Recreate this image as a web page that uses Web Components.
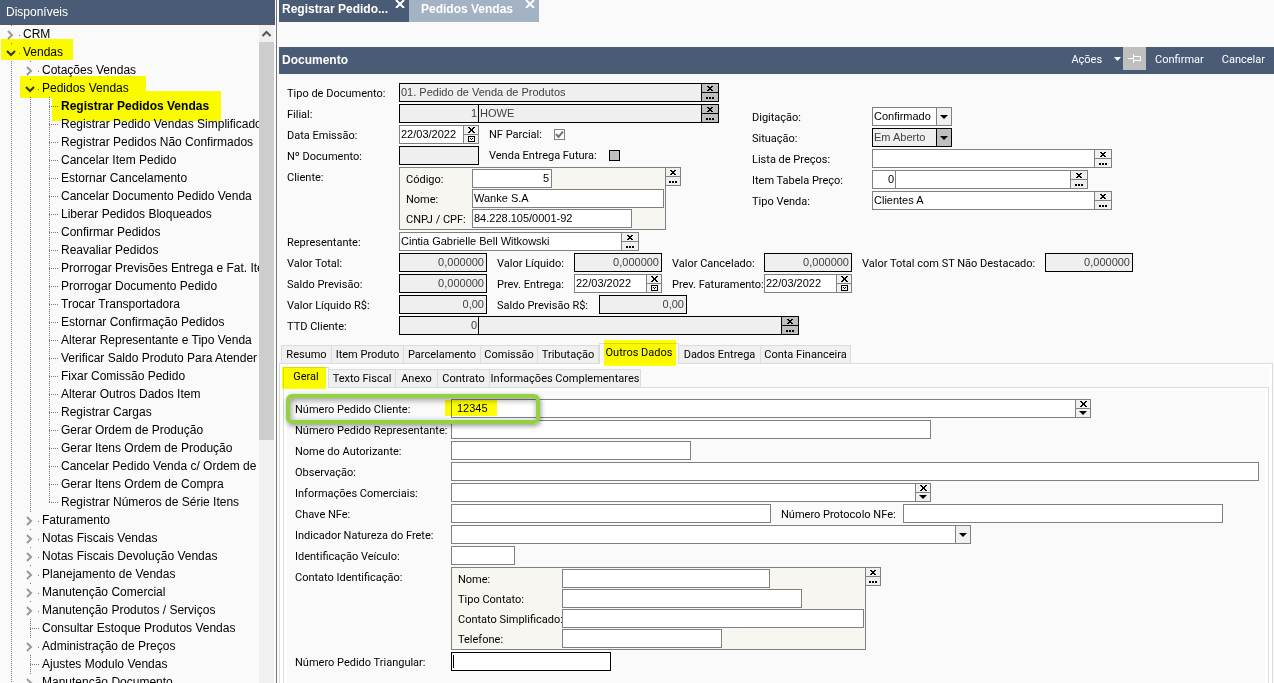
<!DOCTYPE html>
<html lang="pt-BR">
<head>
<meta charset="utf-8">
<title>Registrar Pedidos Vendas</title>
<style>
  :root {
    --navy: #4a5b75;
    --page: #fafafa;
    --line: #808080;
    --tab-line: #dcdcdc;
    --label-font: 11px "Roboto", sans-serif;
    --field-font: 11px "Liberation Sans", Arial, sans-serif;
    --tree-font: 12px "Liberation Sans", Arial, sans-serif;
  }
  body { margin: 0; background: var(--page); color: #000; font: var(--label-font); }
</style>
</head>
<body>
<erp-app></erp-app>

<script>
/* Base class: renders markup once into an open shadow root. */
class ErpElement extends HTMLElement {
  connectedCallback() {
    if (this.shadowRoot) return;
    const root = this.attachShadow({ mode: 'open' });
    root.innerHTML = '<style>*{box-sizing:border-box}' + this.styles() + '</style>' + this.markup();
  }
  attr(name, fallback = '') { return this.getAttribute(name) ?? fallback; }
  styles() { return ''; }
  markup() { return '<slot></slot>'; }
}

/* Yellow marker drawn over its host's content. mark="left top width height" */
const marker = (spec) => {
  if (!spec) return '';
  const [l, t, w, h] = spec.split(' ');
  return `<i class="mark" style="left:${l}px;top:${t}px;width:${w}px;height:${h}px"></i>`;
};
const MARK_CSS = '.mark{position:absolute;z-index:2;background:#ff0;mix-blend-mode:multiply;pointer-events:none}';

/* ---------- navigation tree ---------- */
class ErpTreeItem extends ErpElement {
  styles() {
    return `:host{display:block;position:relative;height:18px}
      a{display:flex;height:18px;line-height:18px;color:#000;text-decoration:none;white-space:nowrap;font:var(--tree-font);align-items:center}
      :host([current]) a{font-weight:bold}
      svg{flex:none;display:block}
      .g{stroke:#777;stroke-dasharray:1 1;fill:none;shape-rendering:crispEdges}
      .c{fill:none;stroke:#999;stroke-width:2}
      .o{stroke:#333}` + MARK_CSS;
  }
  markup() {
    const depth = +this.attr('depth', 0), kind = this.attr('kind', 'leaf');
    let g = '';
    for (let k = 0; k < depth; k++) g += `<path class="g" d="M${11.5 + 19 * k} 0V18"/>`;
    const x = 11 + 19 * depth;
    if (kind === 'leaf') {
      g += `<path class="g" d="M${x + .5} 0V${this.hasAttribute('last') ? 10 : 18}M${x} 9.5H${x + 9}"/>`;
    } else {
      g += `<path class="g" d="M${x + .5} 0v1M${x + 8} 10.5h1"/>`;
      g += kind === 'open'
        ? `<path class="c o" d="M${x - 4} 8l4 4 4-4"/>`
        : `<path class="c" d="M${x - 3} 6l4 4-4 4"/>`;
    }
    const w = 23 + 19 * depth;
    return `<a href="#"><svg width="${w}" height="18" aria-hidden="true">${g}</svg><slot></slot></a>` + marker(this.attr('mark'));
  }
}

class ErpSidebar extends ErpElement {
  styles() {
    return `:host{display:flex;flex-direction:column;width:277px;flex:none;border-right:1px solid #777;background:var(--page);overflow:hidden}
      header{height:25px;flex:none;background:var(--navy);border-bottom:1px solid #5c5552;margin-right:1px;color:#fff;font:var(--tree-font);line-height:25px;padding-left:6px}
      .body{display:flex;flex:1;min-height:0}
      nav{flex:1;min-width:0;overflow:hidden}
      .bar{width:15px;margin-right:2px;background:#f0f0f0;display:flex;flex-direction:column}
      .bar svg{display:block;flex:none}
      .thumb{height:398px;background:#cdcdcd}`;
  }
  markup() {
    return `<header>Disponíveis</header>
      <div class="body"><nav aria-label="Disponíveis"><slot></slot></nav>
      <div class="bar"><svg width="15" height="17"><path d="M3.500 11l4-4 4 4" fill="none" stroke="#555" stroke-width="2"/></svg><div class="thumb"></div></div></div>`;
  }
}

/* ---------- window tabs ---------- */
class ErpDocTab extends ErpElement {
  styles() {
    return `:host{display:flex;position:relative;width:130px;height:22px;background:#a3b3c4;color:#fff}
      :host([active]){background:var(--navy)}
      button{border:0;background:none;color:inherit;padding:0 0 4px;margin:0;font:bold 12px "Liberation Sans",Arial,sans-serif}
      .t{flex:1;text-align:left;padding-left:12px}
      :host([active]) .t{padding-left:3px}
      .x{width:18px;height:8px;padding:0;display:flex;justify-content:center}
      svg{display:block}`;
  }
  markup() {
    return `<button class="t"><slot></slot></button>
      <button class="x" aria-label="Fechar"><svg width="10" height="8"><path d="M1 0l8 8M9 0l-8 8" stroke="#fff" stroke-width="2"/></svg></button>`;
  }
}

/* ---------- document toolbar ---------- */
class ErpToolbar extends ErpElement {
  styles() {
    return `:host{display:flex;align-items:flex-start;height:27px;background:var(--navy);color:#fff}
      h1{flex:1;margin:0;padding-left:3px;font:bold 12px/27px "Liberation Sans",Arial,sans-serif}
      button{border:0;background:none;color:#fff;font:var(--label-font);height:24px;padding:0 9px;margin:0}
      .menu{display:flex;align-items:center;gap:12px;padding:0 2px 0 0}
      .pin{width:23px;height:23px;padding:0;background:#bfbfbf;display:flex;align-items:center;justify-content:center}
      .menu,.pin,.cmd{flex:none}`;
  }
  markup() {
    return `<h1>Documento</h1>
      <button class="menu">Ações<svg width="7" height="4"><path d="M0 0h7L3.500 4z" fill="#fff"/></svg></button>
      <button class="pin" aria-label="Fixar"><svg width="13" height="9" shape-rendering="crispEdges"><path d="M0 4.500h5M5.500 0v9M5 2.500h7.500v4H5" fill="none" stroke="#fff"/></svg></button>
      <button class="cmd">Confirmar</button><button class="cmd">Cancelar</button>`;
  }
}

/* ---------- small stacked buttons beside a field ---------- */
const GLYPHS = {
  clear: '<svg width="6" height="5" shape-rendering="crispEdges"><path d="M0 0h2v1h2V0h2v1H5v1H4v1h1v1h1v1H4V4H2v1H0V4h1V3h1V2H1V1H0z"/></svg>',
  cross: '<svg width="7" height="6" shape-rendering="crispEdges"><path d="M0 0h2v1H0zM5 0h2v1H5zM1 1h2v1H1zM4 1h2v1H4zM2 2h3v2H2zM1 4h2v1H1zM4 4h2v1H4zM0 5h2v1H0zM5 5h2v1H5z"/></svg>',
  more: '<svg width="8" height="4" shape-rendering="crispEdges"><path d="M0 2h2v2H0zM3 2h2v2H3zM6 2h2v2H6z"/></svg>',
  down: '<svg width="8" height="4"><path d="M0 0h8L4 4z"/></svg>',
  calendar: '<svg width="7" height="6" shape-rendering="crispEdges"><path d="M.5 .5h6v5h-6z" fill="none" stroke="#000"/><path d="M2 2h1v1H2zM4 2h1v1H4zM3 3h1v1H3z"/></svg>'
};
class ErpStack extends ErpElement {
  styles() {
    return `:host{display:grid;grid-template-rows:8px 8px;gap:1px;height:17px;background:var(--edge,var(--line))}
      button{display:flex;align-items:center;justify-content:center;border:0;margin:0;padding:0;background:var(--face,#f0f0f0);min-width:0}
      svg{display:block}`;
  }
  markup() {
    const [a, b] = this.attr('icons', 'clear more').split(' ');
    const names = { clear: 'Limpar', cross: 'Limpar', more: 'Pesquisar', down: 'Expandir', calendar: 'Calendário' };
    return `<button aria-label="${names[a]}">${GLYPHS[a]}</button><button aria-label="${names[b]}">${GLYPHS[b]}</button>`;
  }
}

/* ---------- labelled field ----------
   kind: plain | lookup | date | memo | select; lw: label width; w: box width */
class ErpField extends ErpElement {
  styles() {
    return `:host{display:flex;position:relative;height:19px;--edge:var(--line)}
      :host([locked]){--edge:#000;--face:#bfbfbf}
      :host([focused]){--edge:#000}
      label{flex:none;line-height:21px;white-space:nowrap}
      .box{display:flex;flex:0 1 auto;min-width:0;border:1px solid var(--edge);background:#fff}
      :host([locked]) .box{background:#efefef}
      input,select{border:0;outline:0;margin:0;padding:0 1px 2px;background:none;font:var(--field-font);color:#000;min-width:0;flex:1;height:17px;border-radius:0;appearance:none;opacity:1}
      :host([locked]) input,:host([locked]) select{color:#404048}
      :host([num]) input{text-align:right;padding-right:2px}
      .code{flex:none;text-align:right;border-right:1px solid var(--edge)}
      :host([focused]) input{background:linear-gradient(#000,#000) 1px 2px/1px 13px no-repeat}
      :host([inset]) input{padding-left:5px}
      .side{flex:none;border-left:1px solid var(--edge)}
      .arrow{width:15px;flex:none;display:flex;align-items:center;justify-content:center;border-left:1px solid var(--edge);background:var(--face,#f0f0f0);pointer-events:none}
      .callout{position:absolute;left:-9px;top:-5px;width:254px;height:30px;z-index:3;border:4px solid #92d13f;border-radius:6px;box-shadow:1px 2px 5px rgba(0,0,0,.4),inset 1px 2px 6px rgba(0,0,0,.4);pointer-events:none}` + MARK_CSS;
  }
  markup() {
    const kind = this.attr('kind', 'plain'), locked = this.hasAttribute('locked');
    const value = this.attr('value'), text = this.attr('label');
    const icons = { lookup: 'clear more', date: 'cross calendar', memo: 'cross down' }[kind];
    const width = kind === 'lookup' ? 17 : 15;
    let inner = '';
    if (this.hasAttribute('code'))
      inner += `<input class="code" aria-label="${text} código" value="${this.attr('code')}" style="width:${this.attr('cw')}px" ${locked ? 'readonly' : ''}>`;
    inner += kind === 'select'
      ? `<select id="f" ${locked ? 'disabled' : ''}><option>${value}</option></select><span class="arrow">${GLYPHS.down}</span>`
      : `<input id="f" value="${value}" ${locked ? 'readonly' : ''}>`;
    if (icons) inner += `<erp-stack class="side" icons="${icons}" style="width:${width}px"></erp-stack>`;
    return `<label for="f" style="width:${this.attr('lw')}px">${text}</label><div class="box" style="width:${this.attr('w')}px">${inner}</div>`
      + marker(this.attr('mark')) + (this.hasAttribute('callout') ? '<i class="callout"></i>' : '');
  }
}

class ErpCheck extends ErpElement {
  styles() {
    return `:host{display:flex;align-items:center;height:19px}
      label{line-height:21px;white-space:nowrap}
      input{appearance:none;width:11px;height:11px;margin:0;border:1px solid var(--line);background:#fff}
      input:checked{background:#fff url("data:image/svg+xml,%3Csvg xmlns='http://www.w3.org/2000/svg' width='9' height='9'%3E%3Cpath d='M1 4l2.500 3L8 1.500' fill='none' stroke='%23777' stroke-width='2'/%3E%3C/svg%3E")}
      input:disabled{border-color:#000;background:#bfbfbf}`;
  }
  markup() {
    return `<label for="c" style="width:${this.attr('lw')}px">${this.attr('label')}</label>
      <input id="c" type="checkbox" ${this.hasAttribute('checked') ? 'checked' : ''} ${this.hasAttribute('locked') ? 'disabled' : ''}>`;
  }
}

/* Framed group of fields with its own buttons at the right */
class ErpGroup extends ErpElement {
  styles() {
    return `:host{display:flex;align-items:flex-start}
      .name{flex:none;line-height:22px}
      .panel{display:flex;flex-direction:column;gap:1px;border:1px solid var(--line);background:#f7f6f1;padding:1px 1px 1px 6px}
      .btns{border:1px solid var(--line);border-left:0;width:15px}`;
  }
  markup() {
    return `<span class="name" style="width:${this.attr('lw')}px">${this.attr('label')}</span>
      <div class="panel" role="group" aria-label="${this.attr('label')}" style="width:${this.attr('w')}px"><slot></slot></div>
      <div class="btns"><erp-stack></erp-stack></div>`;
  }
}

/* Row and column helpers */
class ErpRow extends ErpElement {
  styles() { return ':host{display:flex;gap:10px}'; }
}
class ErpCol extends ErpElement {
  styles() { return ':host{display:flex;flex-direction:column;gap:2px}'; }
}

/* ---------- tab strip with a framed pane ---------- */
class ErpTab extends ErpElement {
  styles() {
    return `:host{display:block;position:relative;height:18px;flex:none}
      button{display:block;width:100%;height:100%;margin:0;padding:0;border:1px solid var(--tab-line);border-left-width:0;border-bottom:0;background:#f0f0f0;font:var(--label-font);color:#000;text-align:center;white-space:nowrap}
      :host([first]) button{border-left-width:1px}
      :host([active]){height:21px;margin-bottom:-1px;z-index:1}
      :host([active]) button{background:var(--page);border-left-width:1px;padding-bottom:3px}` + MARK_CSS;
  }
  markup() {
    this.style.width = this.attr('w') + 'px';
    return `<button role="tab" aria-selected="${this.hasAttribute('active')}"><slot></slot></button>` + marker(this.attr('mark'));
  }
}
class ErpTabs extends ErpElement {
  styles() {
    return `:host{display:flex;flex-direction:column;flex:1;min-height:0}
      .strip{display:flex;align-items:flex-end;height:20px;flex:none;padding-left:var(--strip-start,0)}
      .pane{flex:1;min-height:0;display:flex;flex-direction:column;border:1px solid var(--tab-line);border-bottom:0;box-shadow:inset 3px 0 #fff,inset -3px 0 #fff,inset 0 3px #fff;padding:var(--pane-pad,3px 3px 0)}`;
  }
  markup() {
    return '<div class="strip" role="tablist"><slot name="tab"></slot></div><div class="pane" role="tabpanel"><slot></slot></div>';
  }
}

/* ---------- order form ---------- */
class ErpOrderForm extends ErpElement {
  styles() {
    return `:host{display:flex;flex-direction:column;flex:1;min-height:0}
      .head{padding:9px 8px 8px;display:flex;flex-direction:column;gap:2px}
      .top{display:flex;gap:33px}
      .left{width:432px;flex:none}
      .right{padding-top:24px}
      .outer{--strip-start:2px;margin-right:1px}
      .inner{--strip-start:0px;--pane-pad:11px 8px 0 11px}`;
  }
  markup() {
    return `<div class="head">
      <div class="top">
        <erp-col class="left">
          <erp-field kind="lookup" label="Tipo de Documento:" lw="112" w="320" value="01. Pedido de Venda de Produtos" locked></erp-field>
          <erp-field kind="lookup" label="Filial:" lw="112" w="320" code="1" cw="79" value="HOWE" locked></erp-field>
          <erp-row><erp-field kind="date" label="Data Emissão:" lw="112" w="80" value="22/03/2022"></erp-field><erp-check label="NF Parcial:" lw="65" checked></erp-check></erp-row>
          <erp-row><erp-field label="Nº Documento:" lw="112" w="80" locked></erp-field><erp-check label="Venda Entrega Futura:" lw="120" locked></erp-check></erp-row>
          <erp-group label="Cliente:" lw="112" w="267">
            <erp-field label="Código:" lw="66" w="80" value="5" num></erp-field>
            <erp-field label="Nome:" lw="66" w="192" value="Wanke S.A"></erp-field>
            <erp-field label="CNPJ / CPF:" lw="66" w="160" value="84.228.105/0001-92"></erp-field>
          </erp-group>
        </erp-col>
        <erp-col class="right">
          <erp-field kind="select" label="Digitação:" lw="120" w="80" value="Confirmado"></erp-field>
          <erp-field kind="select" label="Situação:" lw="120" w="80" value="Em Aberto" locked></erp-field>
          <erp-field kind="lookup" label="Lista de Preços:" lw="120" w="240"></erp-field>
          <erp-field kind="lookup" label="Item Tabela Preço:" lw="120" w="216" code="0" cw="23"></erp-field>
          <erp-field kind="lookup" label="Tipo Venda:" lw="120" w="240" value="Clientes A"></erp-field>
        </erp-col>
      </div>
      <erp-field kind="lookup" label="Representante:" lw="112" w="240" value="Cintia Gabrielle Bell Witkowski"></erp-field>
      <erp-row>
        <erp-field label="Valor Total:" lw="112" w="88" value="0,000000" num locked></erp-field>
        <erp-field label="Valor Líquido:" lw="77" w="88" value="0,000000" num locked></erp-field>
        <erp-field label="Valor Cancelado:" lw="92" w="88" value="0,000000" num locked></erp-field>
        <erp-field label="Valor Total com ST Não Destacado:" lw="183" w="88" value="0,000000" num locked></erp-field>
      </erp-row>
      <erp-row>
        <erp-field label="Saldo Previsão:" lw="112" w="88" value="0,000000" num locked></erp-field>
        <erp-field kind="date" label="Prev. Entrega:" lw="77" w="88" value="22/03/2022"></erp-field>
        <erp-field kind="date" label="Prev. Faturamento:" lw="92" w="88" value="22/03/2022"></erp-field>
      </erp-row>
      <erp-row>
        <erp-field label="Valor Líquido R$:" lw="112" w="88" value="0,00" num locked></erp-field>
        <erp-field label="Saldo Previsão R$:" lw="102" w="88" value="0,00" num locked></erp-field>
      </erp-row>
      <erp-field kind="lookup" label="TTD Cliente:" lw="112" w="400" code="0" cw="79" locked></erp-field>
    </div>
    <erp-tabs class="outer">
      <erp-tab slot="tab" w="51" first>Resumo</erp-tab>
      <erp-tab slot="tab" w="72">Item Produto</erp-tab>
      <erp-tab slot="tab" w="77">Parcelamento</erp-tab>
      <erp-tab slot="tab" w="57">Comissão</erp-tab>
      <erp-tab slot="tab" w="61">Tributação</erp-tab>
      <erp-tab slot="tab" w="80" active mark="5 -3 72 26">Outros Dados</erp-tab>
      <erp-tab slot="tab" w="82">Dados Entrega</erp-tab>
      <erp-tab slot="tab" w="90">Conta Financeira</erp-tab>
      <erp-tabs class="inner">
        <erp-tab slot="tab" w="46" active mark="-1 0 44 22">Geral</erp-tab>
        <erp-tab slot="tab" w="67">Texto Fiscal</erp-tab>
        <erp-tab slot="tab" w="42">Anexo</erp-tab>
        <erp-tab slot="tab" w="52">Contrato</erp-tab>
        <erp-tab slot="tab" w="151">Informações Complementares</erp-tab>
        <erp-col>
          <erp-field kind="memo" label="Número Pedido Cliente:" lw="156" w="640" value="12345" inset callout mark="150 1 52 16"></erp-field>
          <erp-field label="Número Pedido Representante:" lw="156" w="480"></erp-field>
          <erp-field label="Nome do Autorizante:" lw="156" w="240"></erp-field>
          <erp-field label="Observação:" lw="156" w="808"></erp-field>
          <erp-field kind="memo" label="Informações Comerciais:" lw="156" w="480"></erp-field>
          <erp-row>
            <erp-field label="Chave NFe:" lw="156" w="320"></erp-field>
            <erp-field label="Número Protocolo NFe:" lw="122" w="320"></erp-field>
          </erp-row>
          <erp-field kind="select" label="Indicador Natureza do Frete:" lw="156" w="520"></erp-field>
          <erp-field label="Identificação Veículo:" lw="156" w="64"></erp-field>
          <erp-group label="Contato Identificação:" lw="156" w="415">
            <erp-field label="Nome:" lw="104" w="208"></erp-field>
            <erp-field label="Tipo Contato:" lw="104" w="240"></erp-field>
            <erp-field label="Contato Simplificado:" lw="104" w="302"></erp-field>
            <erp-field label="Telefone:" lw="104" w="160"></erp-field>
          </erp-group>
          <erp-field label="Número Pedido Triangular:" lw="156" w="160" focused></erp-field>
        </erp-col>
      </erp-tabs>
    </erp-tabs>`;
  }
}

/* ---------- application shell ---------- */
const TREE = [
  [0, 'closed', 'CRM'],
  [0, 'open', 'Vendas', '1 -4 72 21'],
  [1, 'closed', 'Cotações Vendas'],
  [1, 'open', 'Pedidos Vendas', '20 -3 126 22'],
  [2, 'leaf', 'Registrar Pedidos Vendas', '52 -6 169 30'],
  ...['Registrar Pedido Vendas Simplificado', 'Registrar Pedidos Não Confirmados', 'Cancelar Item Pedido',
    'Estornar Cancelamento', 'Cancelar Documento Pedido Venda', 'Liberar Pedidos Bloqueados', 'Confirmar Pedidos',
    'Reavaliar Pedidos', 'Prorrogar Previsões Entrega e Fat. Item', 'Prorrogar Documento Pedido', 'Trocar Transportadora',
    'Estornar Confirmação Pedidos', 'Alterar Representante e Tipo Venda', 'Verificar Saldo Produto Para Atender',
    'Fixar Comissão Pedido', 'Alterar Outros Dados Item', 'Registrar Cargas', 'Gerar Ordem de Produção',
    'Gerar Itens Ordem de Produção', 'Cancelar Pedido Venda c/ Ordem de', 'Gerar Itens Ordem de Compra',
    'Registrar Números de Série Itens'].map(t => [2, 'leaf', t]),
  ...['Faturamento', 'Notas Fiscais Vendas', 'Notas Fiscais Devolução Vendas', 'Planejamento de Vendas',
    'Manutenção Comercial', 'Manutenção Produtos / Serviços'].map(t => [1, 'closed', t]),
  [1, 'leaf', 'Consultar Estoque Produtos Vendas'],
  [1, 'closed', 'Administração de Preços'],
  [1, 'leaf', 'Ajustes Modulo Vendas'],
  [1, 'closed', 'Manutenção Documento']
];
class ErpApp extends ErpElement {
  styles() {
    return `:host{display:flex;height:100vh;overflow:hidden}
      main{flex:1;min-width:0;display:flex;flex-direction:column;padding-left:2px}
      .windows{display:flex;height:22px;flex:none;margin-bottom:25px}
      erp-toolbar{flex:none}`;
  }
  markup() {
    const items = TREE.map(([depth, kind, text, mark], i) => {
      const last = depth === 2 && TREE[i + 1][0] < 2;
      return `<erp-tree-item depth="${depth}" kind="${kind}" ${mark ? `mark="${mark}"` : ''} ${text === 'Registrar Pedidos Vendas' ? 'current' : ''} ${last ? 'last' : ''}>${text}</erp-tree-item>`;
    }).join('');
    return `<erp-sidebar>${items}</erp-sidebar>
      <main>
        <div class="windows"><erp-doc-tab active>Registrar Pedido...</erp-doc-tab><erp-doc-tab>Pedidos Vendas</erp-doc-tab></div>
        <erp-toolbar></erp-toolbar>
        <erp-order-form></erp-order-form>
      </main>`;
  }
}

customElements.define('erp-tree-item', ErpTreeItem);
customElements.define('erp-sidebar', ErpSidebar);
customElements.define('erp-doc-tab', ErpDocTab);
customElements.define('erp-toolbar', ErpToolbar);
customElements.define('erp-stack', ErpStack);
customElements.define('erp-field', ErpField);
customElements.define('erp-check', ErpCheck);
customElements.define('erp-group', ErpGroup);
customElements.define('erp-row', ErpRow);
customElements.define('erp-col', ErpCol);
customElements.define('erp-tab', ErpTab);
customElements.define('erp-tabs', ErpTabs);
customElements.define('erp-order-form', ErpOrderForm);
customElements.define('erp-app', ErpApp);
</script>
</body>
</html>
